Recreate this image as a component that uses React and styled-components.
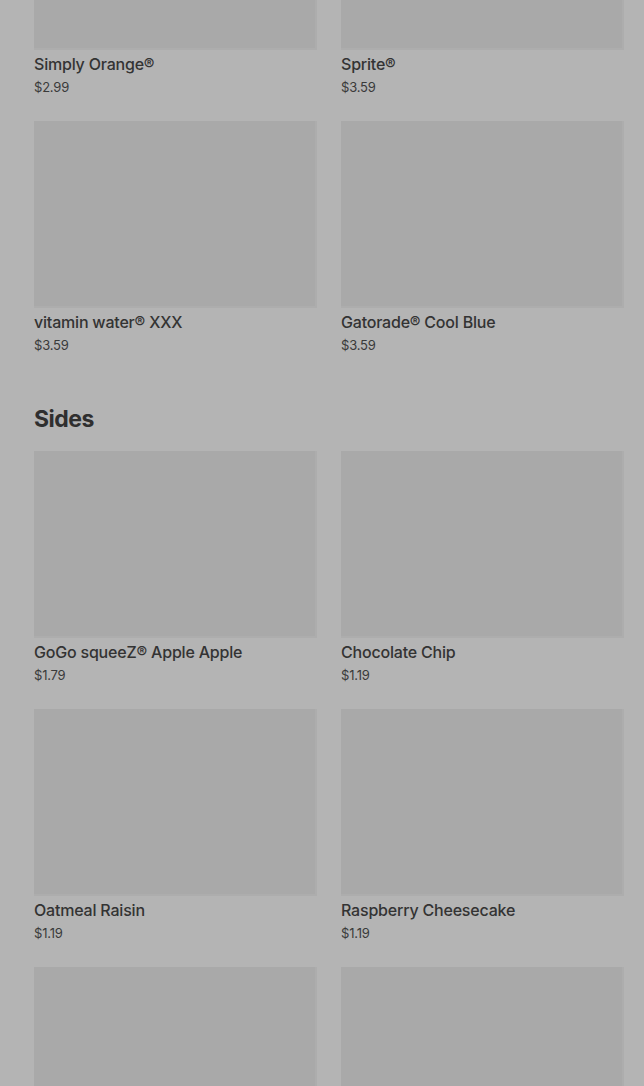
import React from 'react'
import styled, { createGlobalStyle } from 'styled-components'

const Global = createGlobalStyle`
  html, body {
    margin: 0;
    padding: 0;
    background: #b4b4b4;
    overflow: hidden;
  }
  body {
    font-family: Inter, "Liberation Sans", sans-serif;
    color: #2f2f2f;
  }
`

const Page = styled.div`
  height: 1086px;
  overflow: hidden;
  background: #b4b4b4;
`

const Scroller = styled.div`
  margin-top: -137px;
  padding: 0 20px 0 34px;
`

const Section = styled.section`
  margin-bottom: 24px;
`

const Heading = styled.h2`
  margin: 48px 0 16px;
  font-size: 23px;
  line-height: 32px;
  font-weight: 700;
  letter-spacing: -0.5px;
  color: #2f2f2f;
`

const Grid = styled.div`
  display: grid;
  grid-template-columns: 1fr 1fr;
  column-gap: 24px;
  row-gap: 24px;
`

const Card = styled.div`
  display: flex;
  flex-direction: column;
`

const Thumb = styled.div`
  height: 187px;
  background: #a9a9a9;
  box-shadow: inset -2px -2px 0 #adadad;
`

const Name = styled.div`
  margin-top: 4px;
  font-size: 16px;
  line-height: 20px;
  font-weight: 500;
  letter-spacing: -0.2px;
  color: #333333;
`

const Price = styled.div`
  margin-top: 3px;
  font-size: 13px;
  line-height: 20px;
  letter-spacing: -0.2px;
  color: #3a3a3a;
`

const drinks = [
  ['Simply Orange®', '$2.99'],
  ['Sprite®', '$3.59'],
  ['vitamin water® XXX', '$3.59'],
  ['Gatorade® Cool Blue', '$3.59'],
]

const sides = [
  ['GoGo squeeZ® Apple Apple', '$1.79'],
  ['Chocolate Chip', '$1.19'],
  ['Oatmeal Raisin', '$1.19'],
  ['Raspberry Cheesecake', '$1.19'],
  ['Sugar Cookie', '$1.19'],
  ['Brownie', '$1.19'],
]

function Item({ name, price }) {
  return (
    <Card>
      <Thumb />
      <Name>{name}</Name>
      <Price>{price}</Price>
    </Card>
  )
}

export default function App() {
  return (
    <Page>
      <Global />
      <Scroller>
        <Section>
          <Grid>
            {drinks.map(([n, p]) => <Item key={n} name={n} price={p} />)}
          </Grid>
        </Section>
        <Section>
          <Heading>Sides</Heading>
          <Grid>
            {sides.map(([n, p]) => <Item key={n} name={n} price={p} />)}
          </Grid>
        </Section>
      </Scroller>
    </Page>
  )
}
